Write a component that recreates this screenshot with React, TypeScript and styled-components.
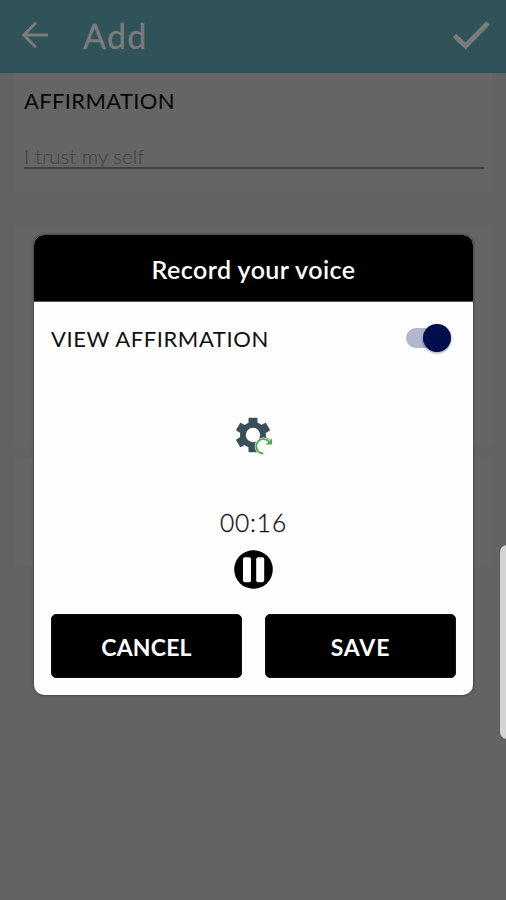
import React from "react";
import styled, { createGlobalStyle } from "styled-components";

const GlobalStyle = createGlobalStyle`
  * { box-sizing: border-box; }
  body {
    margin: 0;
    background: #636363;
    font-family: Lato, "Open Sans", sans-serif;
    overflow: hidden;
  }
`;

const Screen = styled.div`
  position: relative;
  height: 900px;
  overflow: hidden;
  background: #636363;
`;

const AppBar = styled.header`
  display: flex;
  align-items: center;
  height: 73px;
  padding: 0 14px 0 18px;
  background: #305359;
  color: #7b7b7b;
  box-shadow: 0 1px 1px #5b6466;
`;

const BackIcon = styled.svg`
  width: 34px;
  height: 34px;
  margin-top: -4px;
`;

const CheckIcon = styled.svg`
  width: 40px;
  height: 32px;
  margin: -4px 0 0 auto;
`;

const AppTitle = styled.h1`
  margin: -2px 0 0 31px;
  font-size: 34px;
  line-height: 40px;
  font-weight: 400;
  letter-spacing: 1.3px;
  -webkit-text-stroke: 0.3px currentColor;
`;

const Card = styled.section<{ $height: number; $gap?: number }>`
  height: ${({ $height }) => $height}px;
  margin: ${({ $gap = 0 }) => $gap}px 14px 0;
  padding: 0 8px 0 10px;
  background: #656565;
`;

const FieldLabel = styled.label`
  display: block;
  padding-top: 15px;
  font-size: 22px;
  line-height: 26px;
  letter-spacing: 0.35px;
  color: #050505;
`;

const FieldValue = styled.div`
  height: 55px;
  padding-top: 30px;
  border-bottom: 2px solid #424242;
  color: #404040;
  font-size: 20.5px;
  line-height: 25px;
  font-weight: 300;
  white-space: nowrap;
`;

const EdgeHandle = styled.div`
  position: absolute;
  top: 545px;
  right: -8px;
  width: 14px;
  height: 194px;
  border-radius: 8px;
  background: #d3d3d3;
  box-shadow: 0 0 2px #4f4f4f;
`;

const Dialog = styled.div`
  position: absolute;
  top: 235px;
  left: 34px;
  width: 439px;
  height: 460px;
  display: flex;
  flex-direction: column;
  overflow: hidden;
  border-radius: 10px;
  background: #fefefe;
  box-shadow: 0 0 2px 1px #484848;
`;

const DialogTitle = styled.h2`
  flex: none;
  height: 67px;
  margin: 0;
  border-bottom: 1px solid #555;
  background: #000;
  color: #fff;
  font-size: 25px;
  line-height: 68px;
  font-weight: 600;
  letter-spacing: 0.45px;
  text-align: center;
`;

const DialogBody = styled.div`
  flex: 1;
  display: flex;
  flex-direction: column;
  align-items: center;
  padding: 21px 17px 17px;
`;

const ToggleRow = styled.div`
  align-self: stretch;
  display: flex;
  align-items: center;
  justify-content: space-between;
  height: 30px;
  padding-right: 5px;
  color: #111;
  font-size: 22px;
  letter-spacing: 0.6px;
`;

const Switch = styled.div`
  display: flex;
  align-items: center;
  justify-content: flex-end;
  width: 45px;
  height: 20px;
  border-radius: 10px;
  background: #b3b6cd;
`;

const Knob = styled.div`
  flex: none;
  width: 28px;
  height: 28px;
  border-radius: 50%;
  background: #010e4c;
  box-shadow: 0 1px 3px rgba(0, 0, 0, 0.4);
`;

const GearIcon = styled.svg`
  width: 38px;
  height: 39px;
  margin-top: 64px;
`;

const Timer = styled.time`
  margin-top: 51px;
  color: #111;
  font-size: 24.5px;
  line-height: 32px;
  font-weight: 300;
  letter-spacing: 0.9px;
  -webkit-text-stroke: 0.3px currentColor;
`;

const PauseIcon = styled.svg`
  width: 39px;
  height: 39px;
  margin-top: 11px;
`;

const Actions = styled.div`
  align-self: stretch;
  display: grid;
  grid-template-columns: 1fr 1fr;
  gap: 23px;
  margin-top: auto;
`;

const ActionButton = styled.button<{ $spacing: number }>`
  height: 64px;
  padding: 1px 0 0;
  border: 1px solid #111;
  border-radius: 5px;
  background: #000;
  color: #fff;
  font: 700 23px Lato, "Open Sans", sans-serif;
  letter-spacing: ${({ $spacing }) => $spacing}px;
`;

const toothAngles = [0, 60, 120, 180, 240, 300];

export default function App() {
  return (
    <Screen>
      <GlobalStyle />
      <AppBar>
        <BackIcon viewBox="0 0 34 34" fill="none" stroke="currentColor" strokeWidth="3">
          <path d="M30 17H6M18 4.8 5.8 17 18 29.2" />
        </BackIcon>
        <AppTitle>Add</AppTitle>
        <CheckIcon viewBox="0 0 40 32" fill="none" stroke="currentColor" strokeWidth="5">
          <path d="M2.5 16.5 13.5 27 36 4" />
        </CheckIcon>
      </AppBar>
      <Card $height={119}>
        <FieldLabel>AFFIRMATION</FieldLabel>
        <FieldValue>I trust my self</FieldValue>
      </Card>
      <Card $height={220} $gap={33} />
      <Card $height={110} $gap={12} />
      <EdgeHandle />
      <Dialog>
        <DialogTitle>Record your voice</DialogTitle>
        <DialogBody>
          <ToggleRow>
            VIEW AFFIRMATION
            <Switch>
              <Knob />
            </Switch>
          </ToggleRow>
          <GearIcon viewBox="0 0 38 39">
            <g fill="#3b4f5a">
              <circle cx="18" cy="18" r="13" />
              {toothAngles.map((angle) => (
                <rect
                  key={angle}
                  x="13.5"
                  y="0.8"
                  width="9"
                  height="9"
                  rx="0.8"
                  transform={`rotate(${angle} 18 18)`}
                />
              ))}
            </g>
            <circle cx="18" cy="18" r="7.2" fill="#fefefe" />
            <circle cx="28.5" cy="29.3" r="8.8" fill="#fefefe" />
            <path fill="none" stroke="#4cae50" strokeWidth="1.7" d="M28.5 36.5a7.2 7.2 0 1 1 6-11" />
            <path fill="#4cae50" d="M30.5 27.6h6.5v-6Z" />
          </GearIcon>
          <Timer>00:16</Timer>
          <PauseIcon viewBox="0 0 39 39">
            <circle cx="19.5" cy="19.5" r="19.3" fill="#000" />
            <rect x="9" y="7.2" width="8" height="25" rx="2" fill="#fff" />
            <rect x="22.2" y="7.2" width="8" height="25" rx="2" fill="#fff" />
          </PauseIcon>
          <Actions>
            <ActionButton $spacing={0.2}>CANCEL</ActionButton>
            <ActionButton $spacing={0.9}>SAVE</ActionButton>
          </Actions>
        </DialogBody>
      </Dialog>
    </Screen>
  );
}
